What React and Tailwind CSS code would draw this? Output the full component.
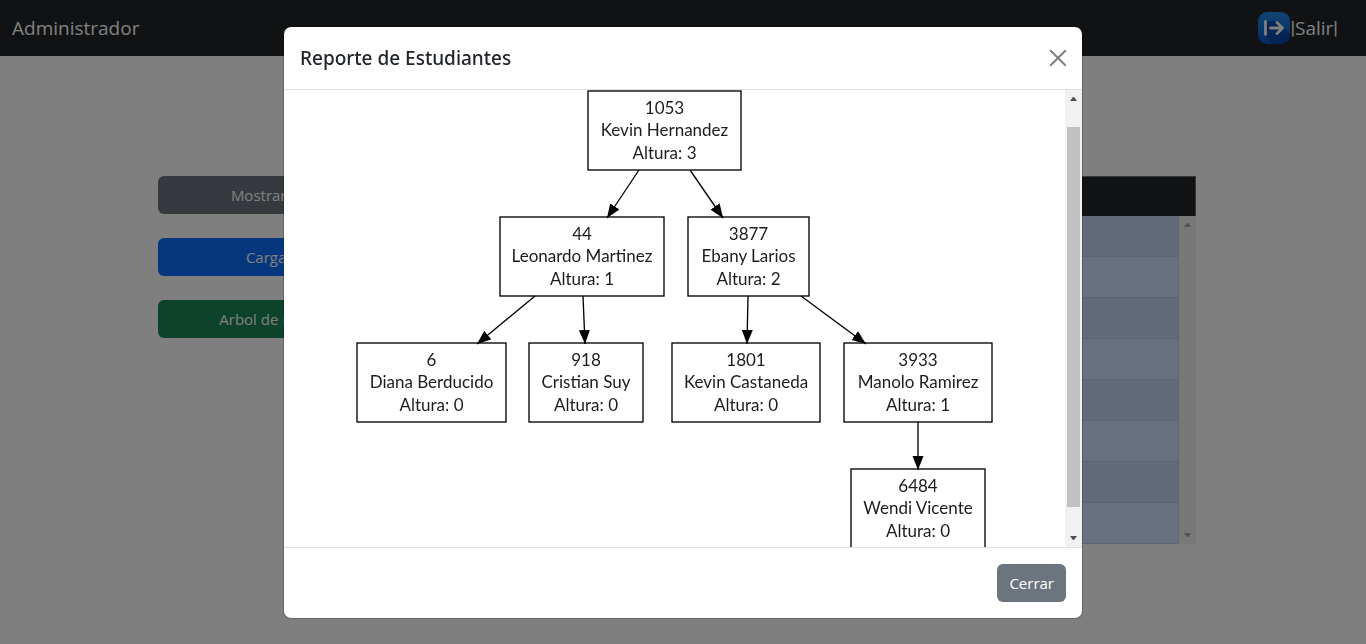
import React from "react";

const nodes = [
  { id: 1053, name: "Kevin Hernandez", height: 3, x: 588, y: 91, w: 153 },
  { id: 44, name: "Leonardo Martinez", height: 1, x: 500, y: 217, w: 164 },
  { id: 3877, name: "Ebany Larios", height: 2, x: 688, y: 217, w: 121 },
  { id: 6, name: "Diana Berducido", height: 0, x: 357, y: 343, w: 149 },
  { id: 918, name: "Cristian Suy", height: 0, x: 529, y: 343, w: 114 },
  { id: 1801, name: "Kevin Castaneda", height: 0, x: 672, y: 343, w: 148 },
  { id: 3933, name: "Manolo Ramirez", height: 1, x: 844, y: 343, w: 148 },
  { id: 6484, name: "Wendi Vicente", height: 0, x: 851, y: 469, w: 134 },
];

const edges = [
  [639, 170, 607, 218],
  [690, 170, 723, 218],
  [535, 296, 477, 344],
  [583, 296, 585, 344],
  [748, 296, 747, 344],
  [801, 296, 866, 344],
  [918, 422, 918, 470],
];

function StudentTree() {
  return (
    <svg
      role="img"
      aria-label="Arbol de estudiantes"
      viewBox="284 90 781 493"
      className="block h-[493px] w-[781px] shrink-0 font-['Lato',sans-serif] text-[17px]"
    >
      <defs>
        <marker
          id="arrow"
          markerUnits="userSpaceOnUse"
          markerWidth="15"
          markerHeight="12"
          refX="14"
          refY="6"
          orient="auto"
        >
          <path d="M0 0.500 L14 6 L0 11.500 Z" fill="black" />
        </marker>
      </defs>
      {edges.map(([x1, y1, x2, y2]) => (
        <line key={x1} x1={x1} y1={y1} x2={x2} y2={y2} stroke="black" strokeWidth="1.33" markerEnd="url(#arrow)" />
      ))}
      {nodes.map((n) => (
        <g key={n.id} textAnchor="middle">
          <rect x={n.x} y={n.y} width={n.w} height="79" fill="none" stroke="black" strokeWidth="1.33" />
          <g fill="#1c1c1c">
            <text x={n.x + n.w / 2} y={n.y + 23}>{n.id}</text>
            <text x={n.x + n.w / 2} y={n.y + 45}>{n.name}</text>
            <text x={n.x + n.w / 2} y={n.y + 68}>Altura: {n.height}</text>
          </g>
        </g>
      ))}
    </svg>
  );
}

function ScrollArrow({ down, muted }) {
  return (
    <svg viewBox="0 0 17 17" className="size-[17px] shrink-0" aria-hidden="true">
      <path d={down ? "M5 6h7L9 10H8Z" : "M5 11h7L9 7H8Z"} fill={muted ? "#a3a3a3" : "#505050"} />
    </svg>
  );
}

function ExitLogo() {
  return (
    <svg viewBox="0 0 32 32" className="size-8" aria-hidden="true">
      <defs>
        <linearGradient id="exit-bg" x1="0" y1="0" x2="0" y2="1">
          <stop offset="0" stopColor="#2489e6" />
          <stop offset="1" stopColor="#0554c4" />
        </linearGradient>
        <clipPath id="exit-clip">
          <rect width="32" height="32" rx="9" />
        </clipPath>
      </defs>
      <g clipPath="url(#exit-clip)">
        <rect width="32" height="32" fill="url(#exit-bg)" />
        <path d="M6 23L9 9L21 9L26 16L34 24V34H17Z" fill="#063f9c" opacity=".7" />
      </g>
      <path d="M7.500 9.500V22.500M12.500 16H24.500M19 10.500L24.500 16L19 21.500" fill="none" stroke="white" strokeWidth="2.800" strokeLinecap="round" strokeLinejoin="round" />
    </svg>
  );
}

export default function App() {
  return (
    <div className="min-h-screen bg-white font-['Open_Sans','Noto_Sans',sans-serif] text-[15px] text-[#212529]">
      <header className="flex h-14 items-center justify-between bg-[#212529] pr-7 pl-3 text-[19px] text-white">
        <span>Administrador</span>
        <a href="#salir" className="flex items-center">
          <ExitLogo />
          <span className="flex items-center leading-7">
            <span className="font-['Roboto',sans-serif]">|</span>
            <span>Salir</span>
            <span className="font-['Roboto',sans-serif]">|</span>
          </span>
        </a>
      </header>

      <main className="flex gap-6 pt-[120px] pr-[170px] pl-[158px]">
        <div className="flex w-[267px] shrink-0 flex-col gap-6 text-white">
          <button type="button" className="h-[38px] rounded-md bg-[#6c757d]">Mostrar Alumnos</button>
          <button type="button" className="h-[38px] rounded-md bg-[#0d6efd]">Cargar Datos</button>
          <button type="button" className="h-[38px] rounded-md bg-[#198754]">Arbol de Estudiantes</button>
        </div>
        <div className="min-w-0 flex-1">
          <div className="h-10 border border-b-0 border-[#6b6f73] bg-[#212529]" />
          <div className="flex">
            <div className="flex-1 border-r border-[#bacbe6]">
              {[0, 1, 2, 3, 4, 5, 6, 7].map((row) => (
                <div key={row} className="h-[41px] border-b border-[#bacbe6] odd:bg-[#c5d7f2] even:bg-[#cfe2ff]" />
              ))}
            </div>
            <div className="flex w-[17px] flex-col justify-between bg-[#f0f0f0]" aria-hidden="true">
              <ScrollArrow muted />
              <ScrollArrow down muted />
            </div>
          </div>
        </div>
      </main>

      <div className="fixed inset-0 overflow-hidden bg-black/50 px-2 pt-[26px]">
        <section
          role="dialog"
          aria-modal="true"
          aria-labelledby="dialog-title"
          className="mx-auto max-w-[800px] overflow-hidden rounded-lg border border-black/20 bg-white bg-clip-padding"
        >
          <div className="flex items-center justify-between border-b border-[#dee2e6] p-4">
            <h1 id="dialog-title" className="font-['Noto_Sans','Open_Sans',sans-serif] text-[19px] leading-[30px] font-medium">Reporte de Estudiantes</h1>
            <button type="button" aria-label="Cerrar ventana" className="flex size-4 items-center justify-center">
              <svg viewBox="0 0 16 16" className="size-4 overflow-visible" aria-hidden="true">
                <path d="M.7 .7L15.300 15.300M15.300 .7L.7 15.300" stroke="#808080" strokeWidth="2" strokeLinecap="round" />
              </svg>
            </button>
          </div>
          <div className="flex h-[457px]">
            <div className="flex min-w-0 flex-1 justify-center overflow-hidden">
              <StudentTree />
            </div>
            <div className="flex w-[17px] flex-col bg-[#f1f1f1]" aria-hidden="true">
              <ScrollArrow />
              <div className="flex-1 px-0.5 pt-5 pb-[23px]">
                <div className="h-full bg-[#c1c1c1]" />
              </div>
              <ScrollArrow down />
            </div>
          </div>
          <div className="flex justify-end border-t border-[#dee2e6] p-4">
            <button type="button" className="h-[38px] rounded-md bg-[#6c757d] px-3 text-white">Cerrar</button>
          </div>
        </section>
      </div>
    </div>
  );
}
